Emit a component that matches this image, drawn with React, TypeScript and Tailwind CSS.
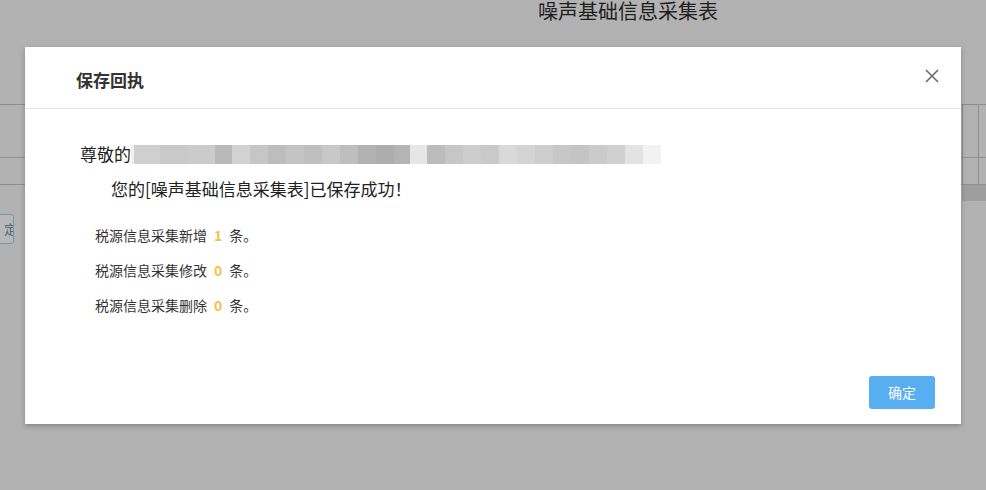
import React from "react";

const mosaic: [number, string][] = [
  [3, "#f0f0f0"],
  [26, "#cfcfcf"],
  [28, "#c9c9c9"],
  [27, "#cbcbcb"],
  [17, "#b9b9b9"],
  [18, "#d2d2d2"],
  [18, "#c6c6c6"],
  [18, "#bdbdbd"],
  [18, "#c4c4c4"],
  [18, "#bfbfbf"],
  [18, "#c8c8c8"],
  [18, "#bebebe"],
  [18, "#b2b2b2"],
  [18, "#adadad"],
  [16, "#b4b4b4"],
  [17, "#e6e6e6"],
  [18, "#bcbcbc"],
  [18, "#c6c6c6"],
  [18, "#cdcdcd"],
  [18, "#c9c9c9"],
  [18, "#d9d9d9"],
  [18, "#d4d4d4"],
  [18, "#cecece"],
  [18, "#c7c7c7"],
  [18, "#c4c4c4"],
  [18, "#cbcbcb"],
  [18, "#d0d0d0"],
  [18, "#e3e3e3"],
  [18, "#f2f2f2"],
];

function Row({ label, n }: { label: string; n: string }) {
  return (
    <div className="flex">
      <span>{label}</span>
      <span className="mx-[7px] text-[#f3c34a] font-bold">{n}</span>
      <span>条。</span>
    </div>
  );
}

export default function App() {
  const font = { fontFamily: '"Noto Sans CJK SC", "Noto Sans", sans-serif' };
  return (
    <div
      className="relative w-[986px] h-[490px] overflow-hidden bg-[#b2b2b2]"
      style={font}
    >
      {/* background page */}
      <div className="flex flex-col">
        <div className="h-[24px] pl-[538px] text-[20px] leading-[24px] -mt-[1px] mb-[1px] text-[#1e1e1e]">
          噪声基础信息采集表
        </div>
        <div className="h-[80px]" />
        <div className="h-[53px] border-t border-[#8f8f8f] flex justify-end">
          <div className="w-[24px] h-full border-l border-[#8f8f8f] flex">
            <div className="w-[16px] border-r border-[#8f8f8f]" />
          </div>
        </div>
        <div className="h-[28px] border-t border-b border-[#8f8f8f] flex justify-end">
          <div className="w-[24px] h-full border-l border-[#8f8f8f] flex">
            <div className="w-[16px] border-r border-[#8f8f8f]" />
          </div>
        </div>
        <div className="h-[16px] flex justify-end">
          <div className="w-[24px] h-full bg-[#9e9e9e]" />
        </div>
        <div className="h-[13px]" />
        <div className="flex">
          <div className="w-[16px] h-[30px] -ml-[2px] rounded-[3px] border border-[#7f93a8] bg-[#b8b8b8] text-[13px] leading-[28px] text-[#4d6580] flex justify-end overflow-hidden">
            <span className="-mr-[4px]">定</span>
          </div>
        </div>
      </div>

      {/* modal */}
      <div className="absolute left-[25px] top-[47px] w-[936px] h-[377px] bg-white shadow-[0_2px_5px_rgba(0,0,0,0.25)] flex flex-col">
        <div className="h-[62px] border-b border-[#e5e5e5] flex items-center justify-between pl-[51px] pr-[21px]">
          <span className="text-[17px] font-bold text-[#333] leading-none pt-[3px]">
            保存回执
          </span>
          <svg width="16" height="16" viewBox="0 0 16 16" className="-mt-[3px]">
            <path
              d="M2 2 L14 14 M14 2 L2 14"
              stroke="#6b6b6b"
              strokeWidth="1.6"
              fill="none"
            />
          </svg>
        </div>
        <div className="flex-1 flex flex-col pl-[55px] pr-[22px]">
          <div className="mt-[33px] flex items-center h-[24px] text-[17px] text-[#222]">
            <span>尊敬的</span>
            <div className="flex h-[19px]">
              {mosaic.map(([w, c], i) => (
                <div key={i} style={{ width: w, background: c }} />
              ))}
            </div>
          </div>
          <div className="mt-[11px] pl-[31px] h-[24px] text-[17px] leading-[24px] text-[#222]">
            您的[噪声基础信息采集表]已保存成功！
          </div>
          <div className="mt-[24px] pl-[15px] flex flex-col gap-[15px] text-[14px] leading-[20px] text-[#333]">
            <Row label="税源信息采集新增" n="1" />
            <Row label="税源信息采集修改" n="0" />
            <Row label="税源信息采集删除" n="0" />
          </div>
          <div className="mt-auto mb-[15px] flex justify-end pr-[4px]">
            <div className="w-[66px] h-[33px] rounded-[3px] bg-[#57aef0] text-white text-[14px] flex items-center justify-center">
              确定
            </div>
          </div>
        </div>
      </div>
    </div>
  );
}
